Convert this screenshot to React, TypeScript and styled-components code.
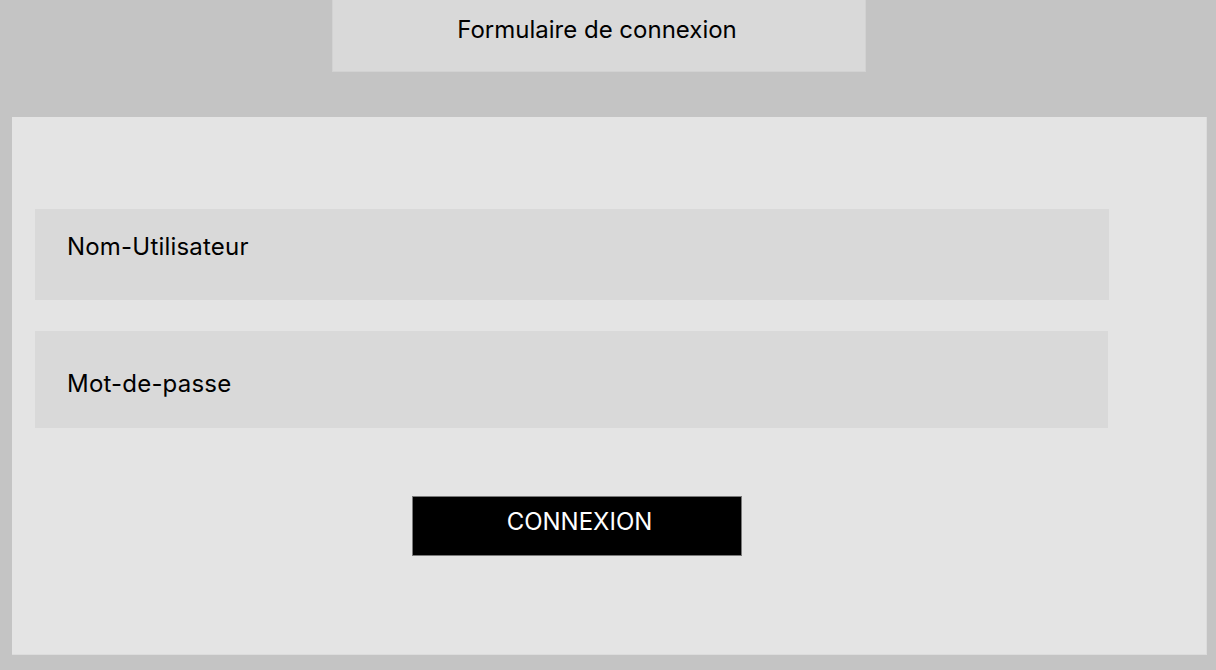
import React from "react";
import styled, { createGlobalStyle } from "styled-components";

const GlobalStyle = createGlobalStyle`
  html, body {
    margin: 0;
    padding: 0;
    background: #c4c4c4;
  }
  body {
    font-family: Inter, "Noto Sans", "Liberation Sans", sans-serif;
    color: #000;
  }
`;

const Page = styled.div`
  width: 1216px;
  height: 670px;
  background: #c4c4c4;
  display: flex;
  flex-direction: column;
  box-sizing: border-box;
  padding-left: 12px;
  overflow: hidden;
`;

const Header = styled.header`
  box-sizing: border-box;
  margin-left: 320px;
  width: 534px;
  height: 72px;
  background: #d9d9d9;
  border: 1px solid #d2d2d2;
  border-top: none;
  padding: 15px 4px 0 0;
  text-align: center;
  font-size: 24px;
  line-height: 29px;
`;

const Panel = styled.main`
  box-sizing: border-box;
  margin-top: 45px;
  width: 1195px;
  height: 538px;
  background: #e4e4e4;
  border: 1px solid #dcdcdc;
  border-top: none;
  border-left: none;
  padding: 92px 0 0 23px;
  display: flex;
  flex-direction: column;
`;

const Field = styled.div<{ $h: number; $w: number; $pt: number; $mt: number }>`
  box-sizing: border-box;
  width: ${(p) => p.$w}px;
  height: ${(p) => p.$h}px;
  margin-top: ${(p) => p.$mt}px;
  background: #d9d9d9;
  padding: ${(p) => p.$pt}px 0 0 32px;
  font-size: 24px;
  line-height: 29px;
  letter-spacing: 0.2px;
`;

const Button = styled.button`
  box-sizing: border-box;
  margin: 68px 0 0 377px;
  width: 330px;
  height: 60px;
  background: #000;
  border: 1px solid #7a7a7a;
  color: #fff;
  font-family: Inter, "Noto Sans", "Liberation Sans", sans-serif;
  font-size: 24px;
  line-height: 29px;
  padding: 10px 0 0 5px;
  display: flex;
  justify-content: center;
  align-items: flex-start;
  cursor: pointer;
`;

export default function App() {
  return (
    <>
      <GlobalStyle />
      <Page>
        <Header>Formulaire de connexion</Header>
        <Panel>
          <Field $w={1074} $h={91} $pt={23} $mt={0}>
            Nom-Utilisateur
          </Field>
          <Field $w={1073} $h={97} $pt={38} $mt={31}>
            Mot-de-passe
          </Field>
          <Button>CONNEXION</Button>
        </Panel>
      </Page>
    </>
  );
}
